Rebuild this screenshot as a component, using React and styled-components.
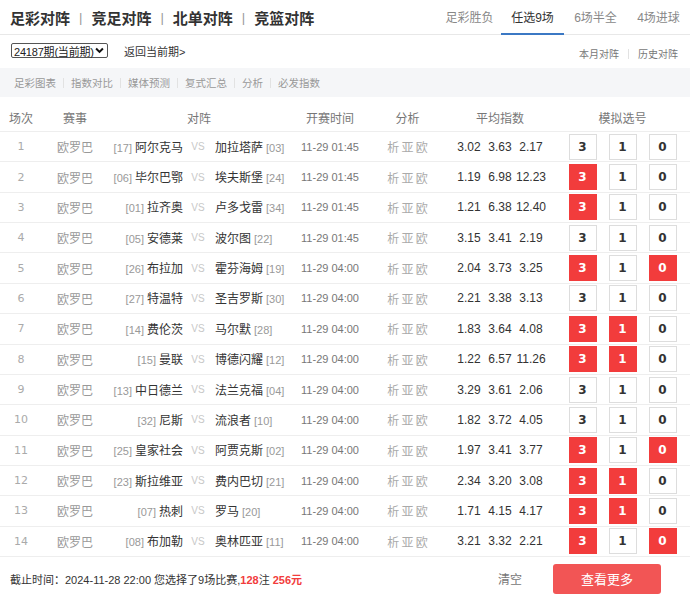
import React from 'react'
import styled, { createGlobalStyle, css } from 'styled-components'

const GlobalStyle = createGlobalStyle`
  body {
    margin: 0;
    background: #fff;
    font-family: "Liberation Sans", "Noto Sans CJK SC", sans-serif;
    color: #333;
  }
`

const Page = styled.div`
  width: 690px;
  height: 600px;
  overflow: hidden;
  background: #fff;
`

const TopBar = styled.div`
  height: 35px;
  box-sizing: border-box;
  border-bottom: 1px solid #e8e8e8;
  display: flex;
  align-items: stretch;
  justify-content: space-between;
  padding-left: 10px;
`

const Titles = styled.div`
  display: flex;
  align-items: center;
  font-size: 15px;
  font-weight: bold;
  color: #333;
`

const TitleSep = styled.span`
  font-weight: normal;
  font-size: 13px;
  color: #999;
  margin: 0 9px;
`

const Tabs = styled.div`
  display: flex;
  align-items: stretch;
`

const Tab = styled.div`
  width: 63px;
  display: flex;
  align-items: center;
  justify-content: center;
  font-size: 12px;
  color: #888;
  box-sizing: border-box;
  margin-bottom: -1px;
  border-bottom: 2px solid transparent;
  ${p => p.$active && css`
    color: #333;
    border-bottom-color: #3b78c4;
  `}
`

const SubBar = styled.div`
  height: 33px;
  display: flex;
  align-items: center;
  justify-content: space-between;
  padding: 0 12px 0 11px;
`

const SubLeft = styled.div`
  display: flex;
  align-items: center;
`

const PeriodSelect = styled.div`
  width: 97px;
  height: 15px;
  box-sizing: border-box;
  border: 1px solid #555;
  border-radius: 2px;
  display: flex;
  align-items: center;
  justify-content: space-between;
  padding: 0 3px 0 2px;
  font-size: 11px;
  letter-spacing: -0.2px;
  white-space: nowrap;
  color: #222;
  margin-top: -2px;
`

const BackLink = styled.span`
  font-size: 11px;
  color: #333;
  margin-left: 16px;
  margin-top: -2px;
`

const SubRight = styled.div`
  display: flex;
  align-items: center;
  font-size: 10px;
  color: #777;
  margin-top: 4px;
`

const SmallSep = styled.span`
  width: 1px;
  height: 10px;
  background: #e2e2e2;
  margin: 0 ${p => p.$gap || 10}px;
`

const Toolbar = styled.div`
  height: 29px;
  background: #f5f6f8;
  display: flex;
  align-items: center;
  padding-left: 14px;
  font-size: 10.5px;
  color: #999;
`

const Table = styled.div`
  display: flex;
  flex-direction: column;
`

const cols = '42px 66px 182px 80px 75px 110px 135px'

const HeadRow = styled.div`
  display: grid;
  grid-template-columns: ${cols};
  height: 35px;
  box-sizing: border-box;
  border-bottom: 1px solid #eee;
  align-items: center;
  padding-top: 6px;
  font-size: 12px;
  color: #777;
  text-align: center;
`

const Row = styled.div`
  display: grid;
  grid-template-columns: ${cols};
  height: 30.36px;
  box-sizing: border-box;
  border-bottom: 1px solid #eee;
  align-items: center;
  text-align: center;
`

const Num = styled.span`
  font-family: "DejaVu Sans", sans-serif;
  font-size: 11px;
  color: #aaa;
`

const League = styled.span`
  font-size: 12px;
  color: #999;
`

const Match = styled.div`
  display: flex;
  align-items: center;
`

const Home = styled.div`
  width: 78px;
  text-align: right;
  white-space: nowrap;
`

const Away = styled.div`
  padding-left: 2px;
  text-align: left;
  white-space: nowrap;
`

const Vs = styled.span`
  width: 24px;
  text-align: center;
  font-size: 10px;
  color: #c8c8c8;
`

const Rank = styled.span`
  font-size: 11px;
  color: #999;
`

const Team = styled.span`
  font-size: 12px;
  color: #333;
  margin: 0 3px;
`

const Time = styled.span`
  font-size: 11px;
  color: #777;
`

const Analysis = styled.span`
  font-size: 12px;
  color: #aaa;
  word-spacing: -1px;
`

const Odds = styled.div`
  display: flex;
  justify-content: center;
`

const Odd = styled.span`
  width: 31px;
  text-align: center;
  font-size: 12px;
  color: #333;
`

const Picks = styled.div`
  display: flex;
  justify-content: center;
  gap: 12px;
`

const Pick = styled.span`
  width: 28px;
  height: 26px;
  box-sizing: border-box;
  border: 1px solid #ddd;
  display: flex;
  align-items: center;
  justify-content: center;
  font-family: "DejaVu Sans", sans-serif;
  font-weight: bold;
  font-size: 12px;
  color: #333;
  ${p => p.$on && css`
    background: #f23c3c;
    border-color: #f23c3c;
    color: #fff;
  `}
`

const Footer = styled.div`
  height: 43px;
  display: flex;
  align-items: center;
  padding: 0 29px 0 10px;
  font-size: 11px;
  color: #333;
`

const Info = styled.div`
  flex: 1;
`

const Red = styled.b`
  color: #f23c3c;
`

const ClearBtn = styled.span`
  font-size: 12px;
  color: #777;
  margin-right: 31px;
`

const MoreBtn = styled.div`
  width: 108px;
  height: 30px;
  border-radius: 3px;
  background: #f25555;
  color: #fff;
  font-size: 13px;
  display: flex;
  align-items: center;
  justify-content: center;
`

const matches = [
  ['17', '阿尔克马', '加拉塔萨', '03', '01:45', ['3.02', '3.63', '2.17'], []],
  ['06', '毕尔巴鄂', '埃夫斯堡', '24', '01:45', ['1.19', '6.98', '12.23'], [3]],
  ['01', '拉齐奥', '卢多戈雷', '34', '01:45', ['1.21', '6.38', '12.40'], [3]],
  ['05', '安德莱', '波尔图', '22', '01:45', ['3.15', '3.41', '2.19'], []],
  ['26', '布拉加', '霍芬海姆', '19', '04:00', ['2.04', '3.73', '3.25'], [3, 0]],
  ['27', '特温特', '圣吉罗斯', '30', '04:00', ['2.21', '3.38', '3.13'], []],
  ['14', '费伦茨', '马尔默', '28', '04:00', ['1.83', '3.64', '4.08'], [3, 1]],
  ['15', '曼联', '博德闪耀', '12', '04:00', ['1.22', '6.57', '11.26'], [3, 1]],
  ['13', '中日德兰', '法兰克福', '04', '04:00', ['3.29', '3.61', '2.06'], []],
  ['32', '尼斯', '流浪者', '10', '04:00', ['1.82', '3.72', '4.05'], []],
  ['25', '皇家社会', '阿贾克斯', '02', '04:00', ['1.97', '3.41', '3.77'], [3, 0]],
  ['23', '斯拉维亚', '费内巴切', '21', '04:00', ['2.34', '3.20', '3.08'], [3, 1]],
  ['07', '热刺', '罗马', '20', '04:00', ['1.71', '4.15', '4.17'], [3, 1]],
  ['08', '布加勒', '奥林匹亚', '11', '04:00', ['3.21', '3.32', '2.21'], [3, 0]],
]

const tools = ['足彩图表', '指数对比', '媒体预测', '复式汇总', '分析', '必发指数']

const Chevron = () => (
  <svg width="9" height="7" viewBox="0 0 10 7" style={{ flexShrink: 0 }}>
    <path d="M1.2 1.2 L5 5 L8.8 1.2" fill="none" stroke="#111" strokeWidth="2.2" />
  </svg>
)

const App = () => {
  return (
    <Page>
      <GlobalStyle />
      <TopBar>
        <Titles>
          足彩对阵<TitleSep>|</TitleSep>竞足对阵<TitleSep>|</TitleSep>北单对阵<TitleSep>|</TitleSep>竞篮对阵
        </Titles>
        <Tabs>
          <Tab>足彩胜负</Tab>
          <Tab $active>任选9场</Tab>
          <Tab>6场半全</Tab>
          <Tab>4场进球</Tab>
        </Tabs>
      </TopBar>

      <SubBar>
        <SubLeft>
          <PeriodSelect>
            <span>24187期(当前期)</span>
            <Chevron />
          </PeriodSelect>
          <BackLink>返回当前期&gt;</BackLink>
        </SubLeft>
        <SubRight>
          本月对阵<SmallSep $gap={9} />历史对阵
        </SubRight>
      </SubBar>

      <Toolbar>
        {tools.map((t, i) => (
          <React.Fragment key={t}>
            {i > 0 && <SmallSep $gap={7} />}
            <span>{t}</span>
          </React.Fragment>
        ))}
      </Toolbar>

      <Table>
        <HeadRow>
          <span>场次</span>
          <span>赛事</span>
          <span>对阵</span>
          <span>开赛时间</span>
          <span>分析</span>
          <span>平均指数</span>
          <span>模拟选号</span>
        </HeadRow>
        {matches.map((m, i) => (
          <Row key={i}>
            <Num>{i + 1}</Num>
            <League>欧罗巴</League>
            <Match>
              <Home>
                <Rank>[{m[0]}]</Rank>
                <Team>{m[1]}</Team>
              </Home>
              <Vs>VS</Vs>
              <Away>
                <Team>{m[2]}</Team>
                <Rank>[{m[3]}]</Rank>
              </Away>
            </Match>
            <Time>11-29 {m[4]}</Time>
            <Analysis>析 亚 欧</Analysis>
            <Odds>
              {m[5].map((o, j) => <Odd key={j}>{o}</Odd>)}
            </Odds>
            <Picks>
              {[3, 1, 0].map(v => (
                <Pick key={v} $on={m[6].includes(v)}>{v}</Pick>
              ))}
            </Picks>
          </Row>
        ))}
      </Table>

      <Footer>
        <Info>
          截止时间：2024-11-28 22:00 您选择了9场比赛,<Red>128</Red>注 <Red>256元</Red>
        </Info>
        <ClearBtn>清空</ClearBtn>
        <MoreBtn>查看更多</MoreBtn>
      </Footer>
    </Page>
  )
}

export default App
